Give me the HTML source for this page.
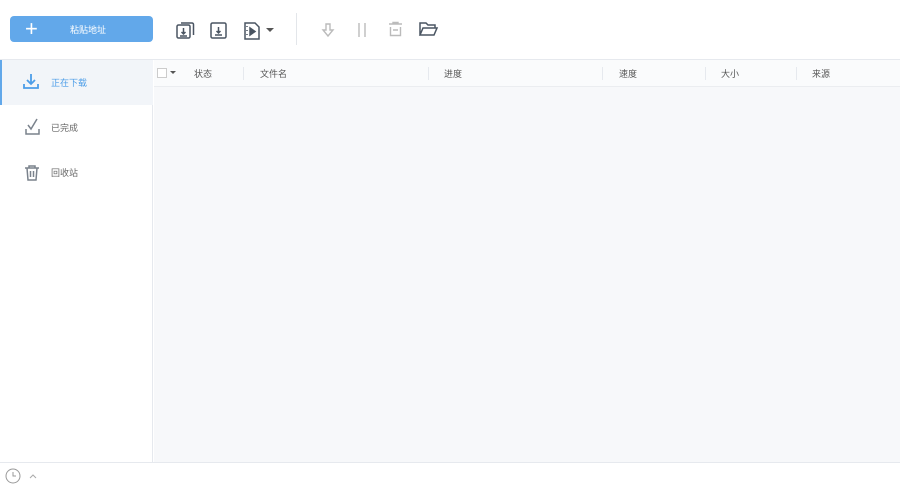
<!DOCTYPE html>
<html><head><meta charset="utf-8"><style>
*{margin:0;padding:0;box-sizing:border-box}
body{width:900px;height:479px;overflow:hidden;background:#fff;font-family:"Liberation Sans","Noto Sans CJK SC",sans-serif;font-size:9px;color:#555;position:relative}
.top{position:absolute;left:0;top:0;width:900px;height:60px;border-bottom:1px solid #e6e9ee;background:#fff}
.btn{position:absolute;left:10px;top:16px;width:143px;height:26px;background:#62a8ea;border-radius:4px;color:#fff}
.btn .p{position:absolute;left:15px;top:2px;font-size:22px;line-height:22px}
.btn .t{position:absolute;left:60px;top:7px;font-size:9px}
.ic{position:absolute}
.side{position:absolute;left:0;top:60px;width:153px;height:402px;border-right:1px solid #e6e9ee;background:#fff}
.item{position:absolute;left:0;width:153px;height:45px}
.item span{position:absolute;left:51px;top:16px;font-size:9px;color:#666}
.main{position:absolute;left:154px;top:60px;width:746px;height:402px;background:#f7f8fa}
.hdr{position:absolute;left:0;top:0;width:746px;height:27px;border-bottom:1px solid #ebedf0;background:#fafbfc}
.hdr span{position:absolute;top:7px;font-size:9px;color:#555}
.hdr i{position:absolute;top:7px;width:1px;height:13px;background:#e6e9ee}
.bot{position:absolute;left:0;top:462px;width:900px;height:17px;border-top:1px solid #e6e9ee;background:#fff}
</style></head><body>
<div class="top">
<div class="btn"><div class="p">+</div><div class="t">粘贴地址</div></div>
<svg class="ic" style="left:175px;top:20px" width="22" height="22" viewBox="0 0 22 22" fill="none" stroke="#4a5562" stroke-width="1.5"><rect x="2" y="5" width="13" height="13" rx="1.5"/><path d="M6 3h11a1.5 1.5 0 0 1 1.5 1.5V15"/><path d="M8.5 8v6M6.5 12l2 2 2-2M5 16h7"/></svg>
<svg class="ic" style="left:209px;top:21px" width="20" height="20" viewBox="0 0 20 20" fill="none" stroke="#4a5562" stroke-width="1.5"><rect x="2" y="2" width="15" height="15" rx="1.5"/><path d="M9.5 6v6M7.5 10l2 2 2-2M6 14h7"/></svg>
<svg class="ic" style="left:242px;top:21px" width="20" height="20" viewBox="0 0 20 20" fill="none" stroke="#4a5562" stroke-width="1.5"><path d="M3 2h10l4 4v12H3z"/><path d="M8 7v7l5-3.5z" fill="#4a5562"/><path d="M5 5v1M5 9v1M5 13v1"/></svg>
<svg class="ic" style="left:266px;top:28px" width="8" height="5"><path d="M0 0h8L4 4z" fill="#555"/></svg>
<div style="position:absolute;left:296px;top:13px;width:1px;height:32px;background:#e3e6ea"></div>
<svg class="ic" style="left:321px;top:22px" width="14" height="17" viewBox="0 0 14 17" fill="none" stroke="#bbb" stroke-width="1.4"><path d="M5 2h4v6h3l-5 6-5-6h3z"/></svg>
<svg class="ic" style="left:356px;top:22px" width="12" height="16" fill="none" stroke="#bbb" stroke-width="1.4"><path d="M3 1v14M9 1v14"/></svg>
<svg class="ic" style="left:387px;top:21px" width="17" height="17" viewBox="0 0 17 17" fill="none" stroke="#bbb" stroke-width="1.4"><path d="M2 3h13M6 3V1.5h5V3M3.5 6v8.5h10V6M6 9h5"/></svg>
<svg class="ic" style="left:418px;top:21px" width="21" height="17" viewBox="0 0 21 17" fill="none" stroke="#4a5562" stroke-width="1.5"><path d="M2 14V2h6l2 2h7v3M2 14l3-7h14l-3 7z"/></svg>
</div>
<div class="side">
<div class="item" style="top:0;background:#f2f5f9;border-left:2px solid #62a8ea">
<svg class="ic" style="left:20px;top:13px" width="18" height="17" viewBox="0 0 18 17" fill="none" stroke="#4c9de8" stroke-width="1.8"><path d="M9 1v10M5 7l4 4 4-4" /><path d="M2 11v4h14v-4"/></svg>
<span style="color:#4c9de8;left:49px">正在下载</span></div>
<div class="item" style="top:45px">
<svg class="ic" style="left:24px;top:13px" width="18" height="18" viewBox="0 0 18 18" fill="none" stroke="#7a828c" stroke-width="1.5"><path d="M4 7l3 4 6-10"/><path d="M2 11v5h13v-5"/></svg>
<span>已完成</span></div>
<div class="item" style="top:90px">
<svg class="ic" style="left:24px;top:14px" width="16" height="18" viewBox="0 0 16 18" fill="none" stroke="#7a828c" stroke-width="1.5"><path d="M1 4h14M5 4V2h6v2M3 4l1 12h8l1-12M6.5 7v6M9.5 7v6"/></svg>
<span>回收站</span></div>
</div>
<div class="main"><div class="hdr">
<div style="position:absolute;left:3px;top:8px;width:10px;height:10px;border:1px solid #ccc;background:#fff"></div>
<svg class="ic" style="left:16px;top:11px" width="6" height="4"><path d="M0 0h6L3 3z" fill="#555"/></svg>
<span style="left:40px">状态</span><i style="left:89px"></i>
<span style="left:106px">文件名</span><i style="left:274px"></i>
<span style="left:290px">进度</span><i style="left:448px"></i>
<span style="left:465px">速度</span><i style="left:551px"></i>
<span style="left:567px">大小</span><i style="left:642px"></i>
<span style="left:658px">来源</span>
</div></div>
<div class="bot">
<svg class="ic" style="left:5px;top:5px" width="16" height="16" fill="none" stroke="#999" stroke-width="1"><circle cx="8" cy="8" r="7"/><path d="M8 4v4h3"/></svg>
<svg class="ic" style="left:29px;top:11px" width="8" height="5" fill="none" stroke="#aaa"><path d="M1 4l3-3 3 3"/></svg>
</div>
</body></html>
